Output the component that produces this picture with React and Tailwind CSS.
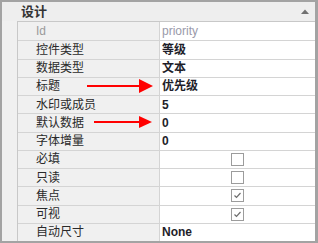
import React from "react";

const rows = [
  { label: "Id", value: "priority", kind: "muted" },
  { label: "控件类型", value: "等级" },
  { label: "数据类型", value: "文本" },
  { label: "标题", value: "优先级" },
  { label: "水印或成员", value: "5" },
  { label: "默认数据", value: "0" },
  { label: "字体增量", value: "0" },
  { label: "必填", kind: "check", checked: false },
  { label: "只读", kind: "check", checked: false },
  { label: "焦点", kind: "check", checked: true },
  { label: "可视", kind: "check", checked: true },
  { label: "自动尺寸", value: "None" },
];

function Check({ checked }) {
  return (
    <div className="w-[13px] h-[13px] border border-[#9c9c9c] bg-white relative">
      {checked && (
        <svg width="11" height="11" viewBox="0 0 11 11" className="absolute left-0 top-0">
          <path d="M2.5 5.5 L4.5 7.5 L8.5 3" fill="none" stroke="#6e6e6e" strokeWidth="1.2" />
        </svg>
      )}
    </div>
  );
}

export default function App() {
  return (
    <div
      className="w-[318px] h-[243px] bg-[#a3a3a3] pt-[2px] pl-[2px] pr-[3px] pb-[2px] relative"
      style={{ fontFamily: '"Liberation Sans", "Noto Sans CJK SC", sans-serif' }}
    >
      <div className="bg-[#f0f0f0] h-full flex flex-col">
        <div className="h-[19px] flex items-center justify-between pl-[19px] pr-[6px] bg-[#eeeeee]">
          <span className="text-[13px] font-bold text-[#333] leading-none">设计</span>
          <svg width="8" height="5" viewBox="0 0 8 5">
            <path d="M0 5 L4 0.5 L8 5 Z" fill="#707070" />
          </svg>
        </div>
        <div className="pl-[15px] h-[220px]">
          <div className="h-full border-l border-t border-[#c8c8c8] grid grid-rows-[repeat(12,1fr)]">
            {rows.map((r, i) => (
              <div key={i} className={"flex " + (i > 0 ? "border-t border-[#d4d4d4]" : "")}>
                <div className="w-[142px] bg-[#f0f0f0] border-r border-[#d4d4d4] flex items-center pl-[18px] text-[12px] leading-none">
                  <span className={r.kind === "muted" ? "text-[#9a9a9a]" : "text-[#2a2a2a]"}>{r.label}</span>
                </div>
                <div
                  className={
                    "flex-1 bg-white flex items-center text-[12px] leading-none " +
                    (r.kind === "check" ? "justify-center" : "pl-[2px]")
                  }
                >
                  {r.kind === "check" ? (
                    <Check checked={r.checked} />
                  ) : r.kind === "muted" ? (
                    <span className="text-[#9a9aaa]">{r.value}</span>
                  ) : (
                    <span className="font-bold text-[#1e1e2a]">{r.value}</span>
                  )}
                </div>
              </div>
            ))}
          </div>
        </div>
      </div>
      <svg className="absolute left-0 top-0 pointer-events-none" width="318" height="243">
        <line x1="87" y1="86" x2="141" y2="86" stroke="#ff0000" strokeWidth="2" />
        <polygon points="139,79 153,86 139,93" fill="#ff0000" />
        <line x1="94" y1="122" x2="141" y2="122" stroke="#ff0000" strokeWidth="2" />
        <polygon points="139,116 152,122 139,128" fill="#ff0000" />
      </svg>
    </div>
  );
}
